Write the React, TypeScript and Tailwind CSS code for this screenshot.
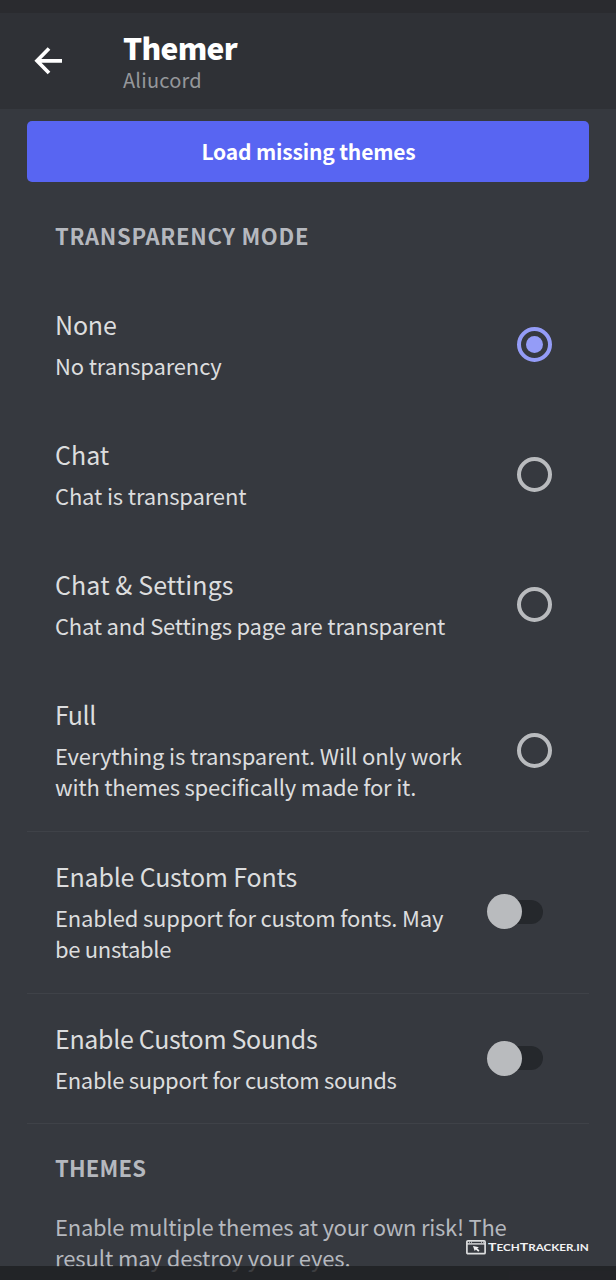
import type { ReactNode } from 'react';

function Radio({ checked = false }: { checked?: boolean }) {
  return (
    <span
      role="radio"
      aria-checked={checked}
      className={
        checked
          ? 'mt-0.5 flex size-[35px] shrink-0 items-center justify-center rounded-full border-4 border-[#949cf7]'
          : 'mt-0.5 flex size-[35px] shrink-0 items-center justify-center rounded-full border-4 border-[#b9bbbe]'
      }
    >
      {checked && <span className="size-[17px] rounded-full bg-[#949cf7]" />}
    </span>
  );
}

function Toggle() {
  return (
    <span role="switch" aria-checked={false} className="mt-px flex h-6 w-14 shrink-0 items-center rounded-full bg-[#25282c]">
      <span className="size-[35px] shrink-0 rounded-full bg-[#b9bbbe]" />
    </span>
  );
}

type RowProps = { title: ReactNode; children: ReactNode; control: ReactNode; divided?: boolean };

function Row({ title, children, control, divided }: RowProps) {
  return (
    <div
      className={
        divided
          ? 'flex items-center justify-between border-t border-[#3f4248] pt-[26px] pr-[46px] pb-[29px] pl-7'
          : 'flex items-center justify-between pt-[27px] pr-[37px] pb-7 pl-7'
      }
    >
      <div className="whitespace-nowrap text-[#dcddde]">
        <div className="text-[25px] leading-9">{title}</div>
        <div className="mt-2 text-[22px] leading-[31px]">{children}</div>
      </div>
      {control}
    </div>
  );
}

export default function App() {
  return (
    <div className="relative flex h-[1280px] w-[616px] flex-col overflow-hidden bg-[#36393f] font-['Noto_Sans_CJK_SC','Noto_Sans',sans-serif]">
      <div className="h-[13px] shrink-0 bg-[#2a2b2f]" />
      <header className="flex h-24 shrink-0 bg-[#2f3136]">
        <svg className="mt-[33px] ml-[33px] size-[30px]" viewBox="0 0 30 30" fill="none" stroke="#fff" strokeWidth="3.7">
          <path d="M29 14.800H4.500M16 2.500L4 14.800l12 12.200" />
        </svg>
        <div className="mt-4 ml-[60px] whitespace-nowrap">
          <div className="text-[30px] leading-9 font-black tracking-[-0.7px] text-white">Themer</div>
          <div className="mt-0.5 text-[20px] leading-[26px] tracking-[0.2px] text-[#95979b]">Aliucord</div>
        </div>
      </header>

      <main className="flex flex-1 flex-col px-[27px]">
        <button className="mt-3 h-[61px] w-[562px] shrink-0 rounded-[5px] bg-[#5865f2] pt-px pl-px text-[21px] font-bold tracking-[-0.17px] text-white">
          Load missing themes
        </button>
        <h2 className="mt-[38px] mb-7 pl-7 text-[22px] leading-[31px] font-bold tracking-[0.7px] text-[#b5b8be]">
          TRANSPARENCY MODE
        </h2>

        <Row title={<span className="tracking-[-0.2px]">None</span>} control={<Radio checked />}>
          <span className="tracking-[-0.15px]">No transparency</span>
        </Row>
        <Row title="Chat" control={<Radio />}>
          <span className="tracking-[-0.15px]">Chat is transparent</span>
        </Row>
        <Row title={<span className="tracking-[0.1px]">Chat &amp; Settings</span>} control={<Radio />}>
          <span className="tracking-[-0.21px]">Chat and Settings page are transparent</span>
        </Row>
        <Row title={<span className="tracking-[-0.5px]">Full</span>} control={<Radio />}>
          <span className="tracking-[-0.12px]">Everything is transparent. Will only work</span>
          <br />
          <span className="tracking-[-0.2px]">with themes specifically made for it.</span>
        </Row>
        <div className="mt-px">
          <Row divided title={<span className="tracking-[-0.2px]">Enable Custom Fonts</span>} control={<Toggle />}>
            <span className="tracking-[-0.18px]">Enabled support for custom fonts. May</span>
            <br />
            <span className="tracking-[-0.3px]">be unstable</span>
          </Row>
        </div>
        <Row divided title={<span className="tracking-[-0.32px]">Enable Custom Sounds</span>} control={<Toggle />}>
          <span className="tracking-[-0.29px]">Enable support for custom sounds</span>
        </Row>

        <section className="-mt-px border-t border-[#3f4248] pt-7 pl-7 whitespace-nowrap text-[#b5b8be]">
          <h2 className="text-[22px] leading-[31px] font-bold tracking-[0.2px]">THEMES</h2>
          <p className="mt-7 text-[22px] leading-[31px]">
            <span className="tracking-[-0.25px]">Enable multiple themes at your own risk! The</span>
            <br />
            <span className="tracking-[-0.1px]">result may destroy your eyes.</span>
          </p>
        </section>
      </main>

      <div className="absolute top-[1266px] left-0 h-[14px] w-[616px] bg-[#1e1f22]/80" />
      <div className="absolute top-[1238px] left-[466px] flex items-center text-[#f2f2f3]">
        <svg className="h-[15px] w-5" viewBox="0 0 20 15" fill="none" stroke="#dcddde">
          <rect x=".9" y=".9" width="18.200" height="12.800" rx="1" strokeWidth="1.700" />
          <path d="M1 3.900h18" strokeWidth="1.400" />
          <path d="M3 2.200h1M5 2.200h1M15 2.200h1M17 2.200h1" />
          <path d="M7 6l6 1.300-1.800 1 2.300 2.200-1.300 1.200-2.300-2.300-1.200 1.700z" fill="#f2f2f3" stroke="none" />
        </svg>
        <span className="ml-0.5 origin-left scale-x-[1.17] font-['Lato',sans-serif] text-[12px] leading-[18px] font-bold whitespace-nowrap">
          T<span className="text-[10px]">ECH</span>T<span className="text-[10px]">RACKER.IN</span>
        </span>
      </div>
    </div>
  );
}
